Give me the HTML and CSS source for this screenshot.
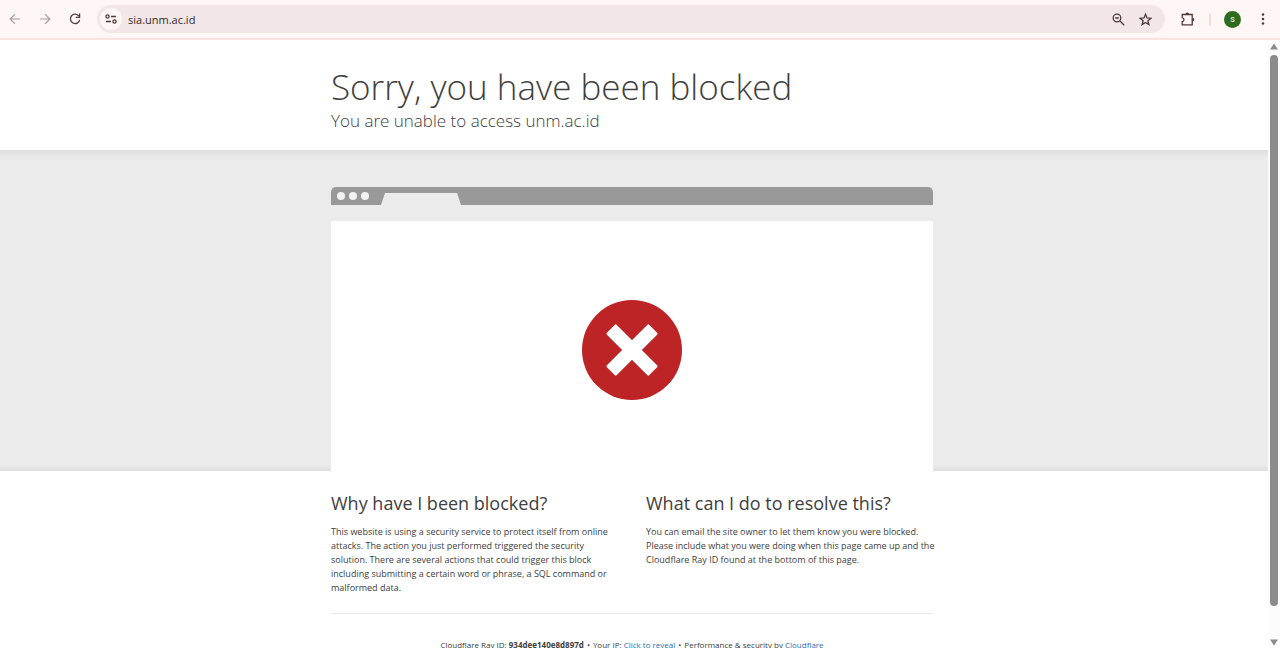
FILE: index.html
```html
<!DOCTYPE html>
<html lang="en-US">
<head>
    <meta charset="utf-8">
    <title>Attention Required! | Cloudflare</title>
    <meta name="viewport" content="width=device-width, initial-scale=1">
    <link rel="stylesheet" href="styles.css">
</head>
<body>
    <header class="toolbar">
        <button class="tool" aria-label="Back" disabled>
            <svg width="12" height="12" viewBox="0 0 12 12"><path d="M11 6H1.500M6 1.200L1.200 6L6 10.800"/></svg>
        </button>
        <button class="tool" aria-label="Forward" disabled>
            <svg width="12" height="12" viewBox="0 0 12 12"><path d="M1 6H10.500M6 1.200L10.800 6L6 10.800"/></svg>
        </button>
        <button class="tool" aria-label="Reload">
            <svg width="12" height="12" viewBox="0 0 12 12"><path d="M10 3.200A4.700 4.700 0 1 0 10.700 6.800"/><path d="M10.600 0.500V4.400H6.800"/></svg>
        </button>
        <div class="address">
            <button class="site-info" aria-label="View site information">
                <svg width="12" height="10" viewBox="0 0 12 10"><circle cx="2.500" cy="2.500" r="1.600"/><path d="M6 2.500H11M1 7.500H6"/><circle cx="9.500" cy="7.500" r="1.600"/></svg>
            </button>
            <input class="url" type="text" value="sia.unm.ac.id" aria-label="Address">
            <button class="tool" aria-label="Zoom">
                <svg width="13" height="13" viewBox="0 0 13 13"><circle cx="5" cy="5" r="3.800"/><path d="M8 8L12.200 12.200M3.200 5H6.800"/></svg>
            </button>
            <button class="tool" aria-label="Bookmark this tab">
                <svg width="13" height="13" viewBox="0 0 13 13"><path d="M6.500 1.300L8 4.900L11.900 5.200L8.900 7.700L9.900 11.600L6.500 9.500L3.100 11.600L4.100 7.700L1.100 5.200L5 4.900Z"/></svg>
            </button>
        </div>
        <button class="tool extensions" aria-label="Extensions">
            <svg width="14" height="14" viewBox="0 0 14 14"><path d="M1.200 2.500H11.200V12.800H1.200V9.700C3.600 9.200 3.600 6.200 1.200 5.700Z"/><path class="bump" d="M4.300 2.400A1.900 1.900 0 0 1 8.100 2.400ZM11.400 5.700A1.900 1.900 0 0 1 11.400 9.500Z"/></svg>
        </button>
        <span class="divider"></span>
        <button class="avatar" aria-label="Profile">s</button>
        <button class="tool menu" aria-label="Menu">
            <svg width="4" height="12" viewBox="0 0 4 12"><circle class="bump" cx="2" cy="1.500" r="1.300"/><circle class="bump" cx="2" cy="6" r="1.300"/><circle class="bump" cx="2" cy="10.500" r="1.300"/></svg>
        </button>
    </header>

    <div class="viewport">
        <main class="page">
            <div class="wrapper title">
                <h1>Sorry, you have been blocked</h1>
                <h2>You are unable to access unm.ac.id</h2>
            </div>

            <section class="highlight">
                <div class="wrapper">
                    <div class="window-bar">
                        <span class="dot"></span>
                        <span class="dot"></span>
                        <span class="dot"></span>
                        <span class="tab"></span>
                    </div>
                    <div class="window-body">
                        <svg width="100" height="100" viewBox="0 0 100 100" role="img" aria-label="Blocked">
                            <circle cx="50" cy="50" r="50" fill="#bd2426"/>
                            <g fill="#fff" transform="translate(50 50)">
                                <rect x="-30" y="-7" width="60" height="14" rx="1.500" transform="rotate(45)"/>
                                <rect x="-30" y="-7" width="60" height="14" rx="1.500" transform="rotate(-45)"/>
                            </g>
                        </svg>
                    </div>
                </div>
            </section>

            <section class="wrapper columns">
                <div class="column">
                    <h2>Why have I been blocked?</h2>
                    <p>This website is using a security service to protect itself from online attacks. The action you just performed triggered the security solution. There are several actions that could trigger this block including submitting a certain word or phrase, a SQL command or malformed data.</p>
                </div>
                <div class="column">
                    <h2>What can I do to resolve this?</h2>
                    <p>You can email the site owner to let them know you were blocked. Please include what you were doing when this page came up and the Cloudflare Ray ID found at the bottom of this page.</p>
                </div>
            </section>

            <footer class="wrapper">
                <p class="footer-text">
                    <span>Cloudflare Ray ID: <strong>934dee140e8d897d</strong></span>
                    <span>&bull;</span>
                    <span>Your IP: <a href="#">Click to reveal</a></span>
                    <span>&bull;</span>
                    <span>Performance &amp; security by <a href="#">Cloudflare</a></span>
                </p>
            </footer>
        </main>
        <div class="scrollbar">
            <svg width="8" height="7" viewBox="0 0 8 7"><path d="M4 0.500L8 6.500H0Z"/></svg>
            <span class="thumb"></span>
            <svg width="8" height="7" viewBox="0 0 8 7"><path d="M4 6.500L8 0.500H0Z"/></svg>
        </div>
    </div>
</body>
</html>
```
FILE: styles.css
```css
*{
    box-sizing: border-box;
}
body{
    display: flex;
    flex-direction: column;
    height: 100vh;
    margin: 0;
    overflow: hidden;
    background-color: white;
    color: #404040;
    font-family: "Open Sans", "Noto Sans", sans-serif;
}
h1,h2,p{
    margin: 0;
}
button{
    display: flex;
    align-items: center;
    justify-content: center;
    padding: 0;
    border: 0;
    background: none;
}

/* browser toolbar */
.toolbar{
    display: flex;
    flex-shrink: 0;
    align-items: center;
    height: 40px;
    background-color: #fff7f5;
    border-bottom: 2px solid #fae3df;
}
.tool{
    width: 30px;
    height: 28px;
}
.tool svg,.site-info svg{
    fill: none;
    stroke: #4d3b3a;
    stroke-width: 1.3;
}
.tool:disabled svg{
    stroke: #a79d9c;
    stroke-width: 1.2;
}
.tool .bump{
    fill: #4d3b3a;
    stroke: none;
}
.address{
    display: flex;
    flex: 1;
    align-items: center;
    height: 28px;
    margin-left: 7px;
    padding: 0 6px 0 3px;
    border-radius: 14px;
    background-color: #f2e6e6;
}
.address .tool{
    width: 27px;
}
.site-info{
    width: 22px;
    height: 22px;
    border-radius: 50%;
    background-color: #fff7f5;
}
.url{
    flex: 1;
    min-width: 0;
    padding: 0 0 0 6px;
    border: 0;
    outline: 0;
    background: none;
    color: #332b2b;
    font: 11px "Open Sans", sans-serif;
}
.extensions{
    margin-left: 8px;
}
.divider{
    width: 2px;
    height: 13px;
    margin: 0 13px 0 6px;
    background-color: #fbdcd6;
}
.avatar{
    width: 17px;
    height: 17px;
    border-radius: 50%;
    background-color: #2f6b1f;
    color: white;
    font: 9px "Roboto", sans-serif;
}
.menu{
    width: 16px;
    margin: 0 9px 0 14px;
}

/* page */
.viewport{
    display: flex;
    flex: 1;
    min-height: 0;
}
.page{
    flex: 1;
    overflow: hidden;
}
.wrapper{
    max-width: 606px;
    margin: 0 auto;
    padding-right: 4px;
}
.title{
    padding-top: 24px;
    padding-bottom: 19px;
}
.title h1{
    font-size: 35px;
    font-weight: 300;
    line-height: 46px;
}
.title h2{
    font-size: 17px;
    font-weight: 300;
    line-height: 21px;
}
.highlight{
    padding-top: 37px;
    background-color: #ebebeb;
    background-image: linear-gradient(#dedede, #ebebeb 8px, #ebebeb calc(100% - 6px), #dedede);
}
.window-bar{
    display: flex;
    gap: 4px;
    align-items: center;
    height: 18px;
    padding-left: 6px;
    border-radius: 5px 5px 0 0;
    background-color: #999;
}
.dot{
    width: 8px;
    height: 8px;
    border-radius: 50%;
    background-color: #f2f2f2;
}
.tab{
    align-self: flex-end;
    width: 80px;
    height: 12px;
    margin-left: 8px;
    background-color: #ebebeb;
    clip-path: polygon(4px 0, 76px 0, 100% 100%, 0 100%);
}
.window-body{
    display: flex;
    align-items: center;
    justify-content: center;
    height: 250px;
    margin-top: 16px;
    padding-top: 8px;
    background-color: white;
}
.columns{
    display: grid;
    grid-template-columns: 1fr 1fr;
    gap: 24px;
    padding-top: 20px;
    padding-right: 0;
}
.column:first-child{
    padding-right: 6px;
}
.column h2{
    margin-bottom: 10px;
    font-size: 18px;
    font-weight: 400;
    line-height: 24px;
}
.column p{
    font-size: 9px;
    line-height: 14px;
}
.footer-text{
    display: flex;
    gap: 3px;
    justify-content: center;
    margin-top: 18px;
    padding-top: 25px;
    border-top: 1px solid #ebebeb;
    font-size: 8px;
    line-height: 12px;
}
a{
    color: #2f6fb5;
}

.scrollbar{
    display: flex;
    flex-direction: column;
    gap: 5px;
    align-items: center;
    width: 12px;
    padding: 3px 0 2px;
    background-color: #fcfcfc;
}
.scrollbar svg{
    fill: #8b8b8b;
}
.thumb{
    flex: 1;
    width: 8px;
    margin-bottom: 28px;
    border-radius: 4px;
    background-color: #8b8b8b;
}
```
